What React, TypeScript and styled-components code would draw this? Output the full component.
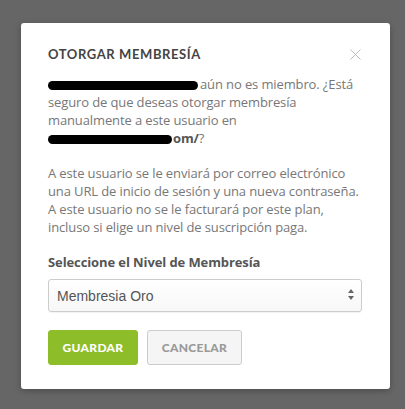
import React from "react";
import styled, { createGlobalStyle } from "styled-components";

const Global = createGlobalStyle`
  html, body { margin: 0; padding: 0; }
  body {
    background: #666666;
    width: 405px;
    height: 409px;
    overflow: hidden;
    font-family: "Open Sans", "Liberation Sans", sans-serif;
  }
`;

const Overlay = styled.div`
  width: 405px;
  height: 409px;
  padding: 23px 0 0 21px;
  box-sizing: border-box;
`;

const Modal = styled.div`
  width: 369px;
  height: 366px;
  box-sizing: border-box;
  background: #ffffff;
  border-radius: 3px;
  box-shadow: 0 2px 6px rgba(0, 0, 0, 0.25);
  padding: 23px 28px 24px 27px;
  display: flex;
  flex-direction: column;
`;

const Header = styled.div`
  display: flex;
  align-items: center;
  justify-content: space-between;
  height: 16px;
`;

const Title = styled.h2`
  margin: 0;
  font-family: "Lato", "Liberation Sans", sans-serif;
  font-weight: 700;
  font-size: 13px;
  line-height: 16px;
  letter-spacing: 0.6px;
  color: #444444;
`;

const Close = styled.button`
  border: 0;
  background: none;
  padding: 0;
  margin-right: 1px;
  width: 11px;
  height: 11px;
  display: flex;
  cursor: pointer;
`;

const Text = styled.p<{ $gap: number }>`
  margin: ${(p) => p.$gap}px 0 0;
  font-size: 13px;
  line-height: 18px;
  letter-spacing: -0.12px;
  white-space: nowrap;
  color: #777777;
`;

const Strong = styled.strong`
  font-weight: 700;
  color: #555555;
`;

const Redacted = styled.span<{ $w: number }>`
  display: inline-block;
  width: ${(p) => p.$w}px;
  height: 9px;
  margin-right: ${(p) => (p.$w > 140 ? 2 : 1)}px;
  vertical-align: -1px;
  background: #000000;
  border-radius: 5px;
`;

const Label = styled.label`
  display: block;
  margin-top: 17px;
  font-size: 13px;
  line-height: 18px;
  font-weight: 700;
  letter-spacing: -0.1px;
  color: #555555;
`;

const SelectWrap = styled.div`
  position: relative;
  margin-top: 8px;
  width: 314px;
`;

const Select = styled.select`
  appearance: none;
  -webkit-appearance: none;
  width: 100%;
  height: 33px;
  box-sizing: border-box;
  border: 1px solid #cccccc;
  border-radius: 3px;
  background: linear-gradient(#ffffff, #f7f7f7);
  box-shadow: 0 1px 1px rgba(0, 0, 0, 0.05);
  padding: 0 24px 0 8px;
  font-family: "Liberation Sans", Arial, sans-serif;
  font-size: 14px;
  color: #555555;
  outline: none;
`;

const Arrows = styled.svg`
  position: absolute;
  right: 8px;
  top: 10px;
  pointer-events: none;
`;

const Actions = styled.div`
  display: flex;
  gap: 9px;
  margin-top: 18px;
`;

const Button = styled.button<{ $primary?: boolean }>`
  height: 35px;
  box-sizing: border-box;
  padding: 0 12px;
  width: ${(p) => (p.$primary ? 90 : 95)}px;
  border-radius: 3px;
  border: 1px solid ${(p) => (p.$primary ? "#8dbd28" : "#cccccc")};
  background: ${(p) => (p.$primary ? "#8dbd28" : "#f5f5f5")};
  color: ${(p) => (p.$primary ? "#ffffff" : "#999999")};
  font-family: "Lato", "Liberation Sans", sans-serif;
  font-weight: 900;
  font-size: 12px;
  letter-spacing: 0.3px;
  cursor: pointer;
`;

export default function App() {
  return (
    <>
      <Global />
      <Overlay>
        <Modal>
          <Header>
            <Title>OTORGAR MEMBRESÍA</Title>
            <Close aria-label="Cerrar">
              <svg width="11" height="11" viewBox="0 0 11 11">
                <path d="M0.5 0.5 L10.5 10.5 M10.5 0.5 L0.5 10.5" stroke="#bbbbbb" strokeWidth="1" fill="none" />
              </svg>
            </Close>
          </Header>
          <Text $gap={13}>
            <Redacted $w={150} aria-hidden="true" />aún no es miembro. ¿Está
            <br />
            seguro de que deseas otorgar membresía
            <br />
            manualmente a este usuario en
            <br />
            <Redacted $w={124} aria-hidden="true" />
            <Strong>om/</Strong>?
          </Text>
          <Text $gap={17}>
            A este usuario se le enviará por correo electrónico
            <br />
            una URL de inicio de sesión y una nueva contraseña.
            <br />
            A este usuario no se le facturará por este plan,
            <br />
            incluso si elige un nivel de suscripción paga.
          </Text>
          <Label htmlFor="nivel">Seleccione el Nivel de Membresía</Label>
          <SelectWrap>
            <Select id="nivel" defaultValue="oro">
              <option value="oro">Membresia Oro</option>
              <option value="plata">Membresia Plata</option>
            </Select>
            <Arrows width="6" height="11" viewBox="0 0 6 11">
              <path d="M3 0 L6 4 L0 4 Z M0 7 L6 7 L3 11 Z" fill="#666666" />
            </Arrows>
          </SelectWrap>
          <Actions>
            <Button $primary>GUARDAR</Button>
            <Button>CANCELAR</Button>
          </Actions>
        </Modal>
      </Overlay>
    </>
  );
}
